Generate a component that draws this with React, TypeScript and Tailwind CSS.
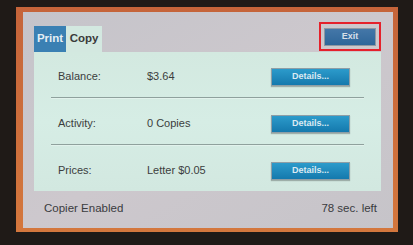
import React from "react";

const rows = [
  { label: "Balance:", value: "$3.64" },
  { label: "Activity:", value: "0 Copies" },
  { label: "Prices:", value: "Letter $0.05" },
];

function DetailsButton() {
  return (
    <button className="w-[79px] h-[18px] border border-[#8d9ea6] bg-gradient-to-b from-[#2c9bcb] to-[#1479ad] text-[9px] font-bold text-[#dbeaf2] shadow-[0_1px_1px_rgba(0,0,0,0.25)]">
      Details...
    </button>
  );
}

export default function App() {
  return (
    <div
      className="w-[413px] h-[245px] overflow-hidden bg-[#1f1a17] pt-[7px] pl-[16px]"
      style={{ fontFamily: '"Liberation Sans", Arial, sans-serif' }}
    >
      {/* orange screen frame */}
      <div className="w-[382px] h-[225px] bg-gradient-to-b from-[#c5643a] to-[#d4773d] pl-[7px] pt-[5px] pr-[5px] pb-[4px]">
        <div className="w-full h-full bg-gradient-to-br from-[#c5c4ca] via-[#cdc8cd] to-[#c6c4c9] flex flex-col pl-[11px] pr-[12px] pt-[10px]">
          {/* header: tabs + exit */}
          <div className="flex items-end justify-between h-[30px]">
            <div className="flex h-[26px]">
              <div className="w-[32px] bg-[#3a80b3] text-[#e4eef4] text-[11.5px] font-bold flex items-center justify-center">
                Print
              </div>
              <div className="w-[36px] bg-[#d3e8e0] text-[#3a3a3a] text-[11.5px] font-bold flex items-center justify-center">
                Copy
              </div>
            </div>
            <div className="self-start w-[62px] h-[29px] border-2 border-[#e5212b] flex items-center justify-center">
              <button className="w-[52px] h-[18px] border border-[#8f98a2] bg-gradient-to-b from-[#4477a8] to-[#2f6699] text-[9px] font-bold text-[#d6dfe8]">
                Exit
              </button>
            </div>
          </div>

          {/* panel */}
          <div className="h-[139px] bg-gradient-to-b from-[#d3e9e0] via-[#d6ede5] to-[#d2e8e0] flex flex-col">
            {rows.map((r, i) => (
              <div key={r.label} className="flex flex-col">
                <div className="h-[45px] pt-[4px] flex items-center text-[11px] text-[#3b3d3d]">
                  <span className="w-[113px] pl-[24px]">{r.label}</span>
                  <span className="w-[124px]">{r.value}</span>
                  <DetailsButton />
                </div>
                {i < rows.length - 1 && (
                  <div className="mx-[17px] h-px bg-[#8fa19d] border-b border-[#e2f2ec] box-content" />
                )}
              </div>
            ))}
          </div>

          {/* footer */}
          <div className="flex-1 flex items-center justify-between pl-[10px] pr-[4px] text-[11.5px] text-[#3a3b3e] pb-[2px]">
            <span>Copier Enabled</span>
            <span>78 sec. left</span>
          </div>
        </div>
      </div>
    </div>
  );
}
